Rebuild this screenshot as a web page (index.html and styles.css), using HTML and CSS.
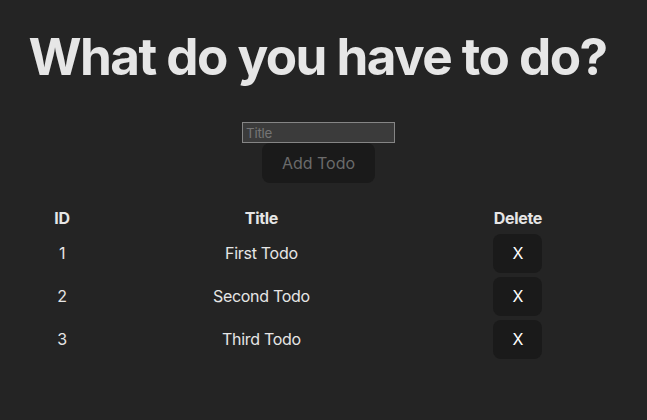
FILE: index.html
```html
<!DOCTYPE html>
<html lang="en">
<head>
<meta charset="utf-8">
<title>Todos</title>
<link rel="stylesheet" href="styles.css">
</head>
<body>
<div class="root">
  <h1 class="heading">What do you have to do?</h1>
  <form class="add-form">
    <input class="title-input" type="text" placeholder="Title">
    <button class="btn btn-add" type="button" disabled>Add Todo</button>
  </form>
  <table class="todo-table">
    <thead>
      <tr><th>ID</th><th>Title</th><th>Delete</th></tr>
    </thead>
    <tbody>
      <tr><td>1</td><td>First Todo</td><td><button class="btn" type="button">X</button></td></tr>
      <tr><td>2</td><td>Second Todo</td><td><button class="btn" type="button">X</button></td></tr>
      <tr><td>3</td><td>Third Todo</td><td><button class="btn" type="button">X</button></td></tr>
    </tbody>
  </table>
</div>
</body>
</html>
```
FILE: styles.css
```css
html, body {
  margin: 0;
  background: #242424;
}
body {
  font-family: Inter, "Liberation Sans", sans-serif;
  font-size: 16px;
  line-height: 1.5;
  font-weight: 400;
  letter-spacing: -0.3px;
  color: rgba(255, 255, 255, 0.87);
  min-height: 420px;
  box-sizing: border-box;
  padding-right: 10px;
  display: flex;
  justify-content: center;
  align-items: flex-start;
  -webkit-font-smoothing: antialiased;
}
.root {
  padding-top: 28px;
  text-align: center;
}
.heading {
  font-size: 51.2px;
  line-height: 1.1;
  font-weight: 700;
  letter-spacing: -1.55px;
  margin: 0 0 0 -2px;
  color: #e6e6e6;
  white-space: nowrap;
}
.add-form {
  margin-top: 38px;
  display: flex;
  flex-direction: column;
  align-items: center;
  gap: 0;
}
.title-input {
  box-sizing: border-box;
  width: 153px;
  height: 21px;
  padding: 1px 3px;
  border: 1px solid #858585;
  background: #3b3b3b;
  color: #e6e6e6;
  font-family: Inter, "Liberation Sans", sans-serif;
  font-size: 13.33px;
  letter-spacing: -0.2px;
  outline: none;
}
.title-input::placeholder {
  color: #757575;
}
.btn {
  border-radius: 8px;
  border: 0;
  padding: 0.6em 1.2em;
  font-size: 16px;
  font-weight: 400;
  font-family: inherit;
  letter-spacing: -0.2px;
  background: #1a1a1a;
  color: #ffffff;
  cursor: pointer;
}
.btn-add {
  letter-spacing: 0;
  padding: 0.6em 1.25em;
  color: #6b6b6b;
}
.todo-table {
  width: 100%;
  margin-top: 20px;
  border-spacing: 2px;
}
.todo-table th,
.todo-table td {
  padding: 1px;
  text-align: center;
}
.todo-table th {
  font-weight: 700;
  color: #e6e6e6;
}
.todo-table td {
  color: #e6e6e6;
}
```
